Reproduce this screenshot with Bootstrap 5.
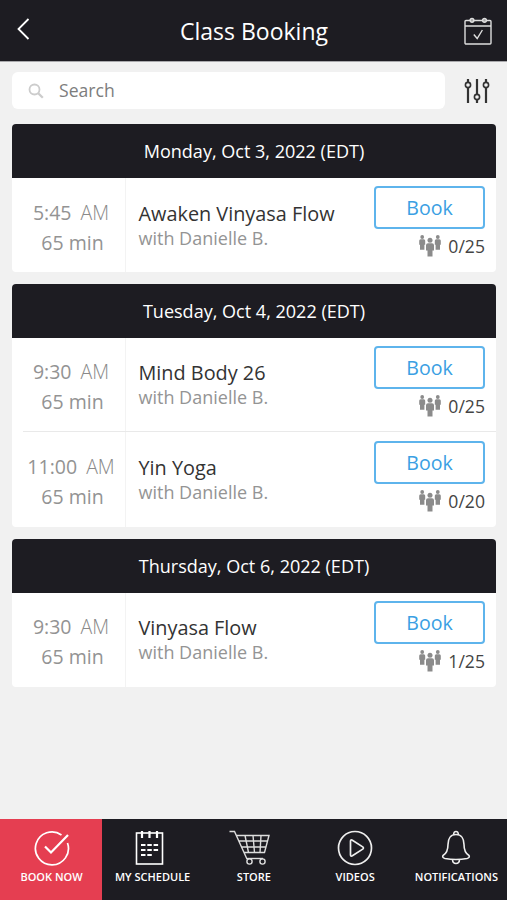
<!DOCTYPE html>
<html lang="en">
<head>
<meta charset="utf-8">
<meta name="viewport" content="width=device-width, initial-scale=1">
<title>Class Booking</title>
<link href="https://cdn.jsdelivr.net/npm/bootstrap@5.3.0/dist/css/bootstrap.min.css" rel="stylesheet">
<style>
  body { font-family: "Open Sans", "Noto Sans", sans-serif; background: #f1f1f1; height: 900px; overflow: hidden; }
  svg { display: block; flex: none; }
  .ink { background: #1d1c22; color: #fff; }
  .topbar { height: 62px; padding: 0 14px 0 17px; border-bottom: 1px solid #a9a9ac; }
  .topbar h1 { font-size: 23px; line-height: 62px; padding: 1px 2px 0 0; }
  .topbar .side { width: 30px; }
  .topbar .side:first-child { margin-top: -3px; }
  .tools { padding: 10px 17px 0 12px; margin-bottom: 14.6px; }
  .search-box { width: 433px; height: 37px; border-radius: 6px; padding-left: 16px; font-size: 17.6px; color: #7d7d7d; }
  .search-box span { margin-left: 15px; }
  .day { margin: 0 11px 12px 12px; border-radius: 4px; }
  .day-title { height: 54px; font-size: 18.05px; padding-top: 1px; }
  .slot { height: 94px; }
  .slot + .slot { height: 95px; }
  .slot + .slot::before { content: ""; position: absolute; left: 11px; right: 0; top: -1px; height: 1px; background: #e9e9e9; }
  .slot + .slot > div, .day:first-of-type .what, .day:first-of-type .when { padding-top: 20px; }
  .when { width: 114px; border-right: 1px solid #f3f3f3; color: #939393; font-size: 19.5px; line-height: 30px; padding: 19px 0 0 5px; }
  .when .ampm { font-weight: 300; margin-left: 4px; color: #8a8a8a; }
  .when .length { padding-left: 3px; }
  .what { padding: 21px 0 0 12.5px; }
  .slot + .slot > .what, .day:first-of-type .slot > .what { padding-top: 22px; }
  .slot + .slot > .action { padding-top: 0; margin-top: 9px; }
  .class-name { font-size: 19.85px; line-height: 28px; color: #333; }
  .teacher { font-size: 18px; line-height: 24px; margin-top: -2px; color: #949494; }
  .action { width: 111px; margin: 8px 11px 0 0; }
  .btn-book { height: 43px; border: 2px solid #5eb4ec; border-radius: 4px; color: #3b9fe3; font-size: 19.6px; line-height: 40px; padding: 0; }
  .spots { font-size: 17.6px; line-height: 24px; color: #444; margin-top: 5.5px; }
  .spots svg { margin-right: 7px; }
  .tabbar { height: 81px; }
  .tab { flex: 1 1 0; color: #fff; font-size: 11px; font-weight: 600; line-height: 16px; padding-top: 10px; }
  .tab.active { background: #e53e51; flex: 0 0 102px; padding-left: 1px; }
  .tab svg { margin-bottom: 2px; }
</style>
<script src="https://cdn.jsdelivr.net/npm/bootstrap@5.3.0/dist/js/bootstrap.bundle.min.js"></script>
</head>
<body class="d-flex flex-column">
<svg width="0" height="0" class="position-absolute">
  <symbol id="people" viewBox="0 0 22 22">
    <g fill="#8b8b8b">
      <circle cx="3.200" cy="2" r="1.900"/><path d="M1.700 4.200h3q1.500 0 1.500 1.500v4h-.8v5H1v-5H.2v-4q0-1.500 1.500-1.500z"/>
      <circle cx="18.800" cy="2" r="1.900"/><path d="M17.300 4.200h3q1.500 0 1.500 1.500v4H21v5h-4.400v-5h-.8v-4q0-1.500 1.500-1.500z"/>
      <circle cx="11" cy="5.300" r="2.500"/><path d="M9 8.200h4q2 0 2 2v5.200h-1.500v6.100h-5v-6.100H7v-5.200q0-2 2-2z"/>
    </g>
  </symbol>
</svg>

<header class="topbar ink d-flex align-items-center justify-content-between flex-shrink-0">
  <a href="#" class="side" aria-label="Back"><svg width="14" height="24" viewBox="0 0 14 24" fill="none" stroke="#fff" stroke-width="1.800"><path d="M11.500 2 1.500 12l10 10"/></svg></a>
  <h1 class="m-0 fw-normal">Class Booking</h1>
  <a href="#" class="side" aria-label="Schedule"><svg width="30" height="30" viewBox="0 0 30 30" fill="none" stroke="#dedede" stroke-width="1.400"><rect x="2" y="4.500" width="26" height="23.500" rx="1"/><path d="M2 10h26M10.800 18.500l3.400 4 5.200-8.500"/><g fill="#aaa"><circle cx="9" cy="4.300" r="1.900"/><circle cx="21.500" cy="4.300" r="1.900"/></g></svg></a>
</header>

<main class="flex-grow-1">
  <div class="tools d-flex align-items-center justify-content-between">
    <div class="search-box bg-white d-flex align-items-center">
      <svg width="16" height="16" viewBox="0 0 16 16" fill="none" stroke="#ccc" stroke-width="1.800"><circle cx="6.500" cy="6.500" r="5"/><path d="m10.200 10.200 4.600 4.600" stroke-width="2.300"/></svg>
      <span>Search</span>
    </div>
    <svg width="26" height="26" viewBox="0 0 26 26" fill="none" stroke="#333" stroke-width="2.200"><path d="M4 1v3.500M4 9.500V25M13 1v15.500M13 21.500V25M22 1v3.500M22 9.500V25"/><g stroke-width="1.600"><circle cx="4" cy="7" r="2.600"/><circle cx="13" cy="19" r="2.600"/><circle cx="22" cy="7" r="2.600"/></g></svg>
  </div>

  <section class="day bg-white overflow-hidden">
    <div class="day-title ink d-flex align-items-center justify-content-center">Monday, Oct 3, 2022 (EDT)</div>
    <div class="slot d-flex position-relative">
      <div class="when text-center"><div>5:45 <span class="ampm">AM</span></div><div class="length">65 min</div></div>
      <div class="what flex-grow-1"><div class="class-name">Awaken Vinyasa Flow</div><div class="teacher">with Danielle B.</div></div>
      <div class="action"><button class="btn btn-book w-100 d-block">Book</button><div class="spots d-flex justify-content-end align-items-center"><svg width="22" height="22"><use href="#people"/></svg>0/25</div></div>
    </div>
  </section>

  <section class="day bg-white overflow-hidden">
    <div class="day-title ink d-flex align-items-center justify-content-center">Tuesday, Oct 4, 2022 (EDT)</div>
    <div class="slot d-flex position-relative">
      <div class="when text-center"><div>9:30 <span class="ampm">AM</span></div><div class="length">65 min</div></div>
      <div class="what flex-grow-1"><div class="class-name">Mind Body 26</div><div class="teacher">with Danielle B.</div></div>
      <div class="action"><button class="btn btn-book w-100 d-block">Book</button><div class="spots d-flex justify-content-end align-items-center"><svg width="22" height="22"><use href="#people"/></svg>0/25</div></div>
    </div>
    <div class="slot d-flex position-relative">
      <div class="when text-center"><div>11:00 <span class="ampm">AM</span></div><div class="length">65 min</div></div>
      <div class="what flex-grow-1"><div class="class-name">Yin Yoga</div><div class="teacher">with Danielle B.</div></div>
      <div class="action"><button class="btn btn-book w-100 d-block">Book</button><div class="spots d-flex justify-content-end align-items-center"><svg width="22" height="22"><use href="#people"/></svg>0/20</div></div>
    </div>
  </section>

  <section class="day bg-white overflow-hidden">
    <div class="day-title ink d-flex align-items-center justify-content-center">Thursday, Oct 6, 2022 (EDT)</div>
    <div class="slot d-flex position-relative">
      <div class="when text-center"><div>9:30 <span class="ampm">AM</span></div><div class="length">65 min</div></div>
      <div class="what flex-grow-1"><div class="class-name">Vinyasa Flow</div><div class="teacher">with Danielle B.</div></div>
      <div class="action"><button class="btn btn-book w-100 d-block">Book</button><div class="spots d-flex justify-content-end align-items-center"><svg width="22" height="22"><use href="#people"/></svg>1/25</div></div>
    </div>
  </section>
</main>

<nav class="tabbar ink d-flex flex-shrink-0">
  <a class="tab active d-flex flex-column align-items-center text-decoration-none" href="#"><svg width="38" height="38" viewBox="0 0 38 38" fill="none" stroke="#fff" stroke-width="1.700"><path d="M28.500 6A16.500 16.500 0 1 0 34.500 14"/><path d="m12 17.500 6 6L35 6" stroke-width="2.200"/></svg>BOOK NOW</a>
  <a class="tab d-flex flex-column align-items-center text-decoration-none" href="#"><svg width="38" height="38" viewBox="0 0 38 38" fill="none" stroke="#fff" stroke-width="1.600"><rect x="2.500" y="4" width="26" height="31"/><path d="M8 2v7M15.500 2v7M23 2v7" stroke-width="2.200"/><path d="M7 16h4.500M13.300 16h4.500M19.600 16h4.500M7 21h4.500M13.300 21h4.500M19.600 21h4.500M7 26h4.500M13.300 26h4.500" stroke-width="1.900"/></svg>MY SCHEDULE</a>
  <a class="tab d-flex flex-column align-items-center text-decoration-none" href="#"><svg width="50" height="38" viewBox="0 0 50 38" fill="none" stroke="#ddd" stroke-width="1.400"><path d="M.5 2.500h5l12 26.500M7.500 6.500H40L35.500 23.500H15.200M10 12h28.500M12.800 18h24M16 6.500l3.500 17M24 6.500l1.500 17M32 6.500l-1 17"/><path d="M17 29.500h17"/><circle cx="20.500" cy="32.500" r="2.600"/><circle cx="33.500" cy="32.500" r="2.600"/></svg>STORE</a>
  <a class="tab d-flex flex-column align-items-center text-decoration-none" href="#"><svg width="38" height="38" viewBox="0 0 38 38" fill="none" stroke="#eee" stroke-width="1.700"><circle cx="19" cy="19" r="16.500"/><path d="M14.500 12.200v13.600q0 2 1.900 1l10.300-6.700q1.400-1.100 0-2.200L16.400 11.200q-1.900-1-1.900 1z"/></svg>VIDEOS</a>
  <a class="tab d-flex flex-column align-items-center text-decoration-none" href="#"><svg width="38" height="38" viewBox="0 0 38 38" fill="none" stroke="#eee" stroke-width="1.600"><path d="M19 5.500c-5.500 0-8 4.500-8 10 0 6-1.500 9-5 11-.8 1.500 0 2.500 2 3 7 1.200 15 1.200 22 0 2-.500 2.800-1.500 2-3-3.500-2-5-5-5-11 0-5.500-2.500-10-8-10z"/><path d="M16.800 5.800c-.8-4.400 5.200-4.400 4.400 0M15.500 30.500c.2 5.300 6.800 5.300 7 0"/></svg>NOTIFICATIONS</a>
</nav>
</body>
</html>
